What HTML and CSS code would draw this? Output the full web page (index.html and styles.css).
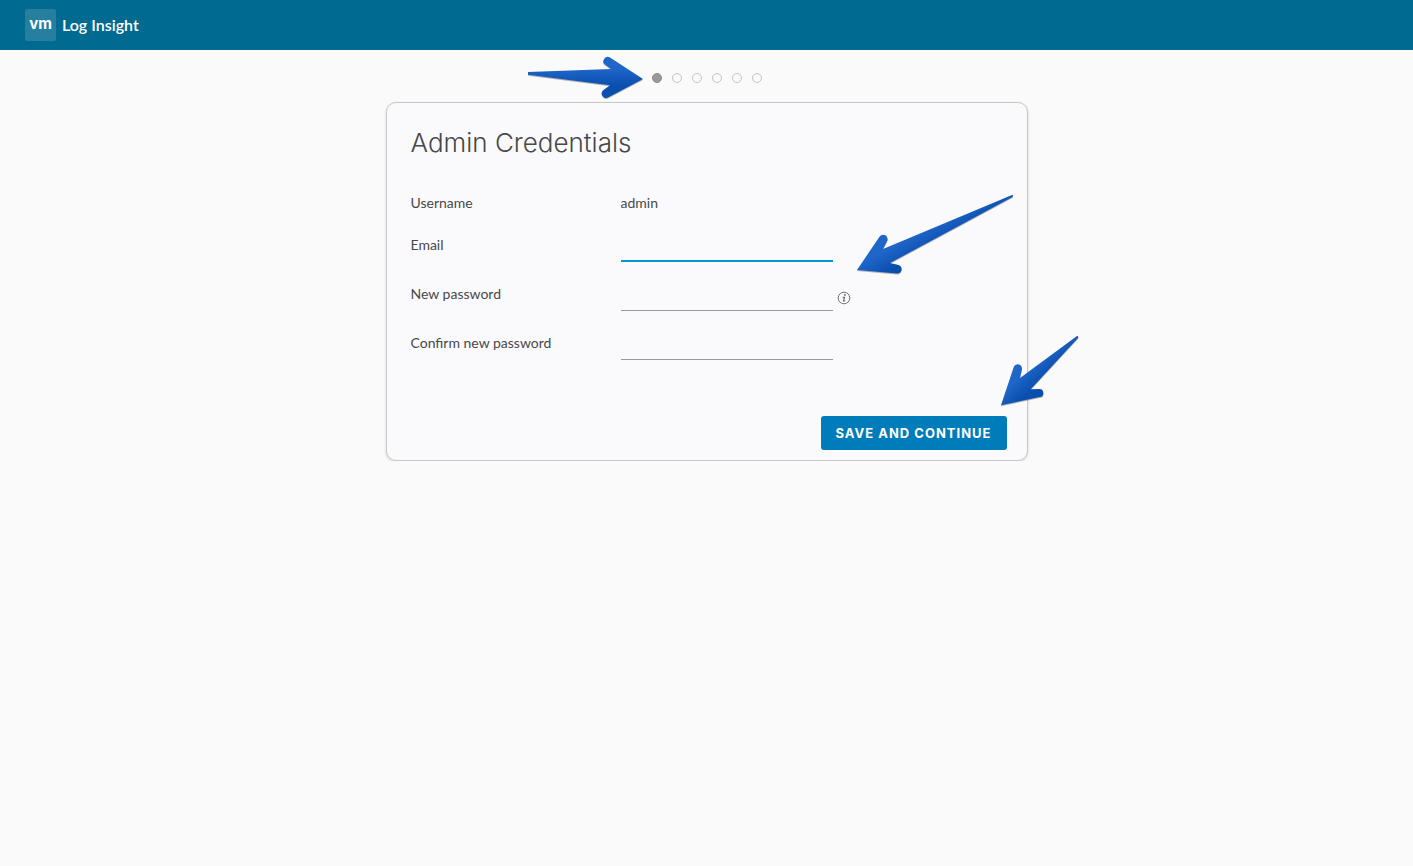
FILE: index.html
```html
<!DOCTYPE html>
<html lang="en">
<head>
    <meta charset="UTF-8">
    <meta name="viewport" content="width=device-width, initial-scale=1.0">
    <title>Log Insight</title>
    <link rel="stylesheet" href="styles.css">
</head>
<body>
    <header class="top-bar">
        <span class="logo">vm</span>
        <span class="product-name">Log Insight</span>
    </header>

    <main class="wizard">
        <ol class="steps">
            <li class="step current"></li>
            <li class="step"></li>
            <li class="step"></li>
            <li class="step"></li>
            <li class="step"></li>
            <li class="step"></li>
        </ol>

        <form class="card">
            <h1>Admin Credentials</h1>
            <div class="form-row">
                <span class="form-label">Username</span>
                <span>admin</span>
            </div>
            <div class="form-row">
                <label class="form-label" for="email">Email</label>
                <input class="active" type="email" id="email">
            </div>
            <div class="form-row">
                <label class="form-label" for="password">New password</label>
                <input type="password" id="password">
                <svg class="info-icon" viewBox="0 0 14 14">
                    <circle cx="7" cy="7" r="5.8" fill="none" stroke="#777" stroke-width="1"/>
                    <circle cx="7.9" cy="3.9" r="0.9" fill="#666"/>
                    <path d="M5.600 6.200 H7.600 L6.500 10 H8.200" fill="none" stroke="#666" stroke-width="1.100"/>
                </svg>
            </div>
            <div class="form-row">
                <label class="form-label" for="confirm-password">Confirm new password</label>
                <input type="password" id="confirm-password">
            </div>
            <div class="actions">
                <button type="submit" class="save-button">SAVE AND CONTINUE</button>
            </div>
        </form>

        <!-- Pointer arrows over the page -->
        <svg class="arrow arrow-steps" width="122" height="48" viewBox="0 0 122 48">
            <defs>
                <linearGradient id="blue-down" x1="0" y1="0" x2="0" y2="1">
                    <stop offset="0.3" stop-color="#1f66c9"/>
                    <stop offset="0.7" stop-color="#0b4fae"/>
                </linearGradient>
                <linearGradient id="blue-diagonal" gradientUnits="userSpaceOnUse" x1="46" y1="50" x2="56" y2="68">
                    <stop offset="0" stop-color="#1f66c9"/>
                    <stop offset="1" stop-color="#0b4fae"/>
                </linearGradient>
                <linearGradient id="blue-steep" gradientUnits="userSpaceOnUse" x1="20" y1="44" x2="32" y2="57">
                    <stop offset="0" stop-color="#1f66c9"/>
                    <stop offset="1" stop-color="#0b4fae"/>
                </linearGradient>
            </defs>
            <path fill="url(#blue-down)" d="M3 18 L86 15 L80 10.6 A4.4 4.4 0 0 1 85 3.4 L118 25 L83 43.5 A4.4 4.4 0 0 1 78.5 36 L85 31.3 L3 20.7 Z"/>
        </svg>
        <svg class="arrow arrow-form" width="162" height="86" viewBox="0 0 162 86">
            <path fill="url(#blue-diagonal)" d="M158 3 Q160 3 158.500 5 L36 71 L43.500 72.700 A4.400 4.400 0 0 1 43 81.500 L3 78 L25.300 45 A4.400 4.400 0 0 1 33 49.300 L29 57 Z"/>
        </svg>
        <svg class="arrow arrow-save" width="82" height="76" viewBox="0 0 82 76">
            <path fill="url(#blue-steep)" d="M78 3 Q80 3 79 5 L31.700 56.300 L40 56 A4 4 0 0 1 40.700 64 L2 72.300 L14.700 34.300 A4 4 0 0 1 22.800 37 L21 45 Z"/>
        </svg>
    </main>
</body>
</html>
```

FILE: styles.css
```css
/* Reset and base styles */
* {
    margin: 0;
    padding: 0;
    box-sizing: border-box;
}

body {
    background-color: #fafafa;
    color: #484848;
    font-family: Lato, 'Open Sans', sans-serif;
    font-size: 14px;
    line-height: 20px;
}

.top-bar {
    display: flex;
    align-items: center;
    gap: 6px;
    height: 50px;
    padding: 0 25px;
    background-color: #006a91;
    color: white;
}

.logo {
    width: 31px;
    height: 32px;
    border-radius: 2px;
    background-color: #267f9f;
    font-family: Inter, sans-serif;
    font-size: 15px;
    font-weight: 700;
    line-height: 30px;
    text-align: center;
}

.product-name {
    font-size: 16px;
    font-weight: 600;
}

.wizard {
    position: relative;
    width: 100%;
    max-width: 642px;
    margin: 0 auto;
}

.steps {
    display: flex;
    justify-content: center;
    gap: 10px;
    padding: 23px 0 19px;
    list-style: none;
}

.step {
    width: 10px;
    height: 10px;
    border: 1px solid #c4c4c4;
    border-radius: 50%;
}

.step.current {
    border-color: #8a8a8a;
    background-color: #999;
}

.card {
    display: flex;
    flex-direction: column;
    gap: 22px;
    padding: 20px 20px 10px 24px;
    border: 1px solid #c8c8cb;
    border-radius: 10px;
    background-color: #fafafd;
    box-shadow: 0 1px 3px rgba(0, 0, 0, 0.15);
}

.card h1 {
    margin-bottom: 8px;
    color: #484848;
    font-family: Inter, sans-serif;
    font-size: 26px;
    font-weight: 300;
    line-height: 40px;
}

.form-row {
    display: flex;
    align-items: flex-start;
}

.form-label {
    width: 210px;
}

.form-row input {
    width: 212px;
    height: 27px;
    border: none;
    border-bottom: 1px solid #999;
    background: transparent;
    font: inherit;
    outline: none;
}

.form-row input.active,
.form-row input:focus {
    border-bottom: 2px solid #0095d3;
}

.info-icon {
    align-self: center;
    width: 14px;
    height: 14px;
    margin-left: 4px;
}

.actions {
    display: flex;
    justify-content: flex-end;
    margin-top: 34px;
}

.save-button {
    height: 34px;
    padding: 0 15px;
    border: none;
    border-radius: 3px;
    background-color: #007cbb;
    color: white;
    font-family: Inter, sans-serif;
    font-size: 13px;
    font-weight: 700;
    letter-spacing: 1px;
    cursor: pointer;
}

/* Arrows */
.arrow {
    position: absolute;
    filter: drop-shadow(0 1px 0 rgba(0, 0, 0, 0.3));
    pointer-events: none;
}

.arrow-steps {
    left: 139px;
    top: 4px;
}

.arrow-form {
    left: 468px;
    top: 142px;
}

.arrow-save {
    left: 613px;
    top: 283px;
}
```
